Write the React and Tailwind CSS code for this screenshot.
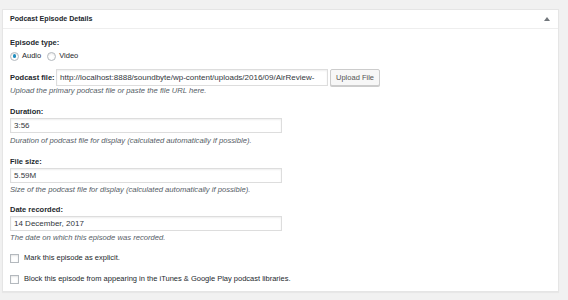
import React from 'react';

const font = { fontFamily: '"Liberation Sans", Arial, sans-serif' };

const Label = ({ children, className = '' }) => (
  <div className={`h-[10px] leading-[10px] text-[7.5px] font-bold text-[#23282d] ${className}`}>{children}</div>
);

const Desc = ({ children, className = '' }) => (
  <div className={`h-[10px] leading-[10px] text-[7.65px] italic text-[#555d66] ${className}`}>{children}</div>
);

const TextInput = ({ value, className = '' }) => (
  <div
    className={`h-[15px] border border-[#ddd] shadow-[inset_0_1px_2px_rgba(0,0,0,0.07)] bg-white px-[3px] flex items-center text-[8px] text-[#32373c] overflow-hidden whitespace-nowrap ${className}`}
  >
    {value}
  </div>
);

const Radio = ({ checked, label }) => (
  <label className="flex items-center gap-[3px]">
    <span className="w-[9px] h-[9px] rounded-full border border-[#b4b9be] bg-white shadow-[inset_0_1px_2px_rgba(0,0,0,0.1)] flex items-center justify-center">
      {checked && <span className="w-[3.5px] h-[3.5px] rounded-full bg-[#1e8cbe]" />}
    </span>
    <span className="text-[7.5px] text-[#23282d]">{label}</span>
  </label>
);

const Checkbox = ({ label, className = '' }) => (
  <label className={`flex items-center gap-[5px] ${className}`}>
    <span className="w-[9px] h-[9px] border border-[#b4b9be] bg-white shadow-[inset_0_1px_2px_rgba(0,0,0,0.1)]" />
    <span className="text-[7.5px] leading-[10px] text-[#23282d]">{label}</span>
  </label>
);

export default function App() {
  return (
    <div className="w-[568px] h-[300px] bg-[#f1f1f1] pt-[9px] pl-[2px]" style={font}>
      <div className="w-[557px] h-[283px] border border-[#e5e5e5] bg-white shadow-[0_1px_1px_rgba(0,0,0,0.04)]">
        <div className="h-[19px] border-b border-[#eee] flex items-center justify-between pl-[7px] pr-[8px]">
          <span className="text-[7.1px] font-bold text-[#23282d]">Podcast Episode Details</span>
          <svg width="6" height="4" viewBox="0 0 6 4">
            <path d="M0 4 L3 0 L6 4 Z" fill="#72777c" />
          </svg>
        </div>
        <div className="px-[7px]">
          <Label className="mt-[9px]">Episode type:</Label>
          <div className="mt-[3px] h-[10px] flex items-center gap-[6px]">
            <Radio checked label="Audio" />
            <Radio label="Video" />
          </div>

          <div className="mt-[8px] h-[17px] flex items-center">
            <span className="text-[7.5px] font-bold text-[#23282d] w-[46px]">Podcast file:</span>
            <TextInput
              className="w-[272px] h-[17px] text-[8.3px]"
              value="http://localhost:8888/soundbyte/wp-content/uploads/2016/09/AirReview-"
            />
            <button className="ml-[2px] h-[17px] w-[50px] border border-[#ccc] rounded-[2px] bg-[#f7f7f7] shadow-[0_1px_0_#ccc] text-[7.5px] text-[#555]">
              Upload File
            </button>
          </div>
          <Desc>Upload the primary podcast file or paste the file URL here.</Desc>

          <Label className="mt-[11px]">Duration:</Label>
          <TextInput className="mt-[1px] w-[272px]" value="3:56" />
          <Desc className="mt-[3px]">Duration of podcast file for display (calculated automatically if possible).</Desc>

          <Label className="mt-[11px]">File size:</Label>
          <TextInput className="mt-[1px] w-[272px]" value="5.59M" />
          <Desc className="mt-[2px]">Size of the podcast file for display (calculated automatically if possible).</Desc>

          <Label className="mt-[10px]">Date recorded:</Label>
          <TextInput className="mt-[1px] w-[272px]" value="14 December, 2017" />
          <Desc className="mt-[2px]">The date on which this episode was recorded.</Desc>

          <Checkbox className="mt-[10px]" label="Mark this episode as explicit." />
          <Checkbox className="mt-[11px]" label="Block this episode from appearing in the iTunes & Google Play podcast libraries." />
        </div>
      </div>
    </div>
  );
}
